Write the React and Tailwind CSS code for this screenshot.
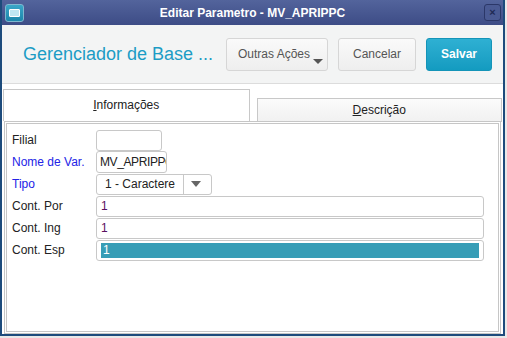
import React from "react";

function Field({ label, labelClass = "text-[#222]", children }) {
  return (
    <div className="flex items-center h-[22px]">
      <div className={`w-[89px] pl-[5px] text-[12px] ${labelClass}`}>{label}</div>
      {children}
    </div>
  );
}

const inputCls =
  "h-[21px] border border-[#c8c8c8] rounded-[3px] bg-white flex items-center px-[4px] text-[12px] overflow-hidden whitespace-nowrap";

export default function App() {
  return (
    <div
      className="w-[507px] h-[338px] bg-[#e9e9e9] overflow-hidden"
      style={{ fontFamily: '"Liberation Sans", Arial, sans-serif' }}
    >
      <div className="w-[505px] h-[336px] border-2 border-t-0 border-[#1d4b7c] bg-white flex flex-col">
        {/* Title bar */}
        <div className="h-[25px] bg-gradient-to-b from-[#53649c] to-[#3d4c86] flex items-center relative shrink-0">
          <div className="ml-[3px] w-[19px] h-[18px] rounded-[3px] border border-[#7fb7cf] bg-gradient-to-b from-[#3aa7c8] to-[#1b86ab] flex items-center justify-center">
            <div className="w-[11px] h-[8px] border border-white bg-[#bfe6f2] rounded-[1px]" />
          </div>
          <div className="absolute inset-0 flex items-center justify-center text-white font-bold text-[12px]">
            Editar Parametro - MV_APRIPPC
          </div>
          <div className="absolute right-[2px] top-[4px] w-[17px] h-[17px] rounded-[3px] border border-[#2b3768] bg-[#4a5a93] flex items-center justify-center text-[#1f2a55] text-[11px] font-bold leading-none">
            ×
          </div>
        </div>

        {/* Header */}
        <div className="h-[59px] bg-[#f3f4f4] border-b border-[#dcdcdc] flex items-center shrink-0">
          <div className="ml-[21px] text-[18px] text-[#1c9cc5] w-[203px]">Gerenciador de Base ...</div>
          <div className="relative w-[102px] h-[33px] rounded-[3px] border border-[#d6d6d6] bg-gradient-to-b from-[#fafafa] to-[#eeeeee] flex items-center justify-center text-[12px] text-[#555] pb-[1px]">
            <span className="-translate-x-[3px]">Outras Ações</span>
            <span className="absolute right-[4px] bottom-[6px] w-0 h-0 border-l-[5px] border-r-[5px] border-t-[5px] border-l-transparent border-r-transparent border-t-[#555]" />
          </div>
          <div className="ml-[10px] w-[78px] h-[33px] rounded-[3px] border border-[#d6d6d6] bg-gradient-to-b from-[#fafafa] to-[#eeeeee] flex items-center justify-center text-[12px] text-[#555]">
            Cancelar
          </div>
          <div className="ml-[10px] w-[66px] h-[33px] rounded-[3px] border border-[#1494b8] bg-gradient-to-b from-[#2eb0d3] to-[#139bc0] flex items-center justify-center text-[12px] text-white font-bold">
            Salvar
          </div>
        </div>

        {/* Tabs */}
        <div className="flex items-end h-[37px] shrink-0 pl-[1px] pr-[1px]">
          <div className="w-[247px] h-[32px] border border-b-0 border-[#c8c8c8] bg-white flex items-center justify-center text-[12px] text-[#222] pb-[2px]">
            <span><span className="underline">I</span>nformações</span>
          </div>
          <div className="ml-[7px] w-[246px] h-[24px] border border-[#c8c8c8] bg-gradient-to-b from-[#fbfbfb] to-[#f1f1f1] flex items-center justify-center text-[12px] text-[#222] mb-[-1px]">
            <span><span className="underline">D</span>escrição</span>
          </div>
        </div>

        {/* Panel */}
        <div className="ml-[2px] mr-[2px] h-[213px] border-double border-[#c6c6c6] border-[3px] bg-white pt-[5px] flex flex-col">
          <Field label="Filial">
            <div className={`${inputCls} w-[66px]`} />
          </Field>
          <Field label="Nome de Var." labelClass="text-[#2323e6]">
            <div className={`${inputCls} w-[71px] h-[22px] text-[#222] text-[11px] tracking-[-0.4px] pl-[3px]`}>MV_APRIPPC</div>
          </Field>
          <Field label="Tipo" labelClass="text-[#2323e6]">
            <div className={`${inputCls} w-[116px] h-[21px] px-0`}>
              <span className="flex-1 pl-[4px] text-[#222]">1 - Caractere</span>
              <span className="w-[24px] h-full border-l border-[#c8c8c8] flex items-center justify-center">
                <span className="w-0 h-0 border-l-[5px] border-r-[5px] border-t-[6px] border-l-transparent border-r-transparent border-t-[#666]" />
              </span>
            </div>
          </Field>
          <Field label="Cont. Por">
            <div className={`${inputCls} w-[388px] text-[#5a1060]`}>1</div>
          </Field>
          <Field label="Cont. Ing">
            <div className={`${inputCls} w-[388px] text-[#5a1060]`}>1</div>
          </Field>
          <Field label="Cont. Esp">
            <div className={`${inputCls} w-[388px] p-[2px]`}>
              <div className="w-full h-full bg-[#379db6] text-white pl-[2px] flex items-center">1</div>
            </div>
          </Field>
        </div>
      </div>
    </div>
  );
}
